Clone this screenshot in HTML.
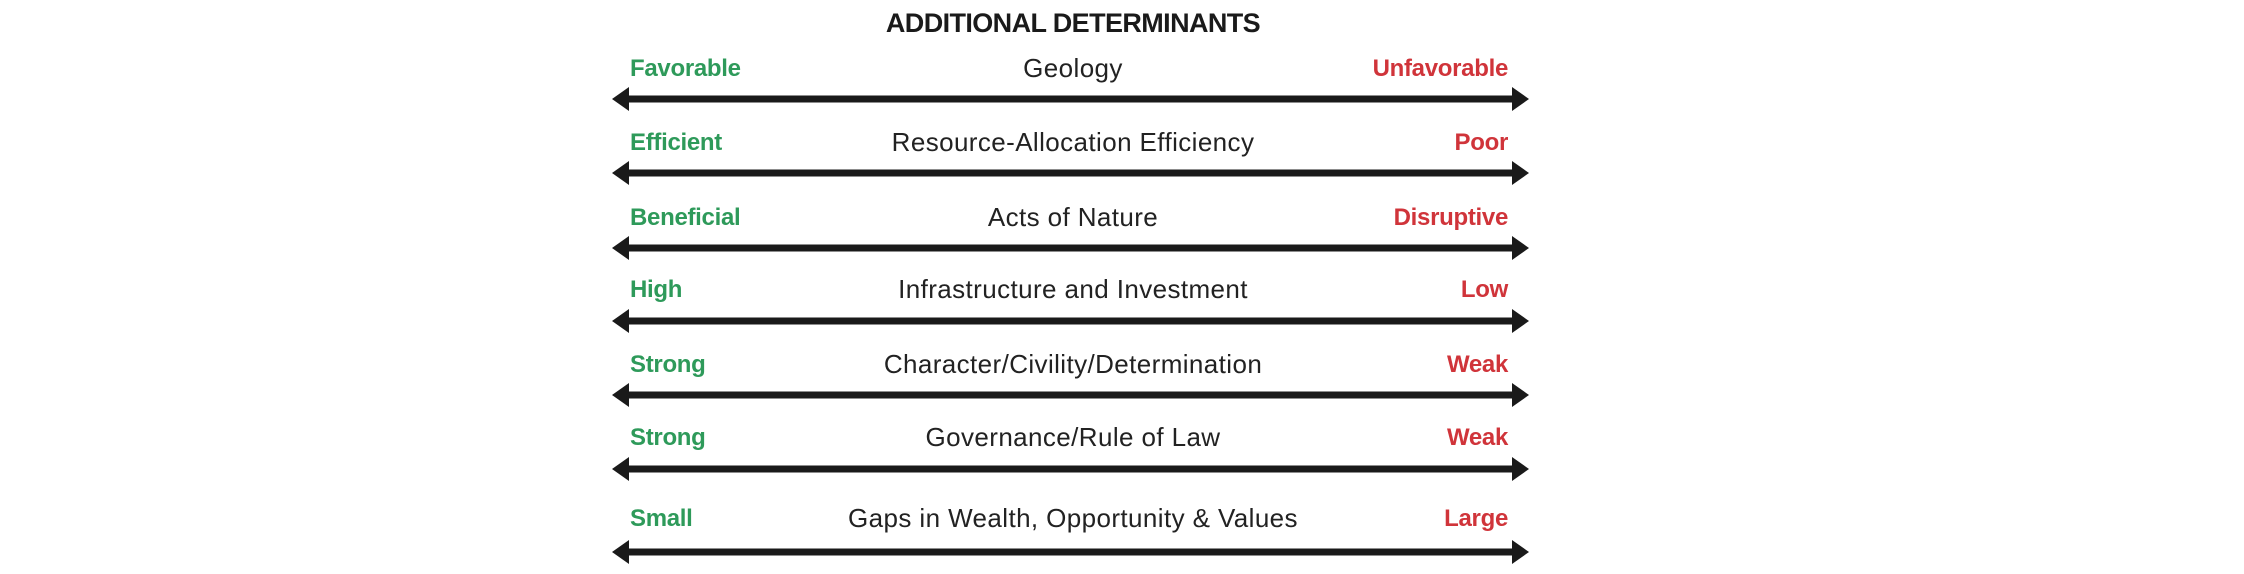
<!DOCTYPE html>
<html><head><style>
body{margin:0;width:2244px;height:574px;background:#fff;position:relative;overflow:hidden;font-family:"Liberation Sans",sans-serif}
.t{position:absolute;left:0;width:2146px;text-align:center;top:8px;font-size:27px;font-weight:bold;color:#1a1a1a;letter-spacing:-0.6px}
.l,.r,.c{position:absolute;font-size:24px;line-height:30px}
.l{left:630px;color:#2e9a5a;font-weight:bold;letter-spacing:-0.3px}
.r{right:736px;color:#d0343a;font-weight:bold;text-align:right;letter-spacing:-0.3px}
.c{left:0;width:2146px;text-align:center;color:#222;font-size:26px;letter-spacing:0.4px}
</style></head><body>
<div class="t">ADDITIONAL DETERMINANTS</div>
<svg width="2244" height="574" style="position:absolute;left:0;top:0">
<g fill="#1a1a1a">
<defs><g id="a"><rect x="625" y="-3.5" width="890" height="7"/><polygon points="612,0 629,-12 629,12"/><polygon points="1529,0 1512,-12 1512,12"/></g></defs>
<use href="#a" y="99"/><use href="#a" y="173"/><use href="#a" y="248"/><use href="#a" y="321"/><use href="#a" y="395"/><use href="#a" y="469"/><use href="#a" y="552"/>
</g></svg>
<div class="l" style="top:54px">Favorable</div><div class="c" style="top:53px">Geology</div><div class="r" style="top:54px">Unfavorable</div>
<div class="l" style="top:128px">Efficient</div><div class="c" style="top:127px">Resource-Allocation Efficiency</div><div class="r" style="top:128px">Poor</div>
<div class="l" style="top:203px">Beneficial</div><div class="c" style="top:202px">Acts of Nature</div><div class="r" style="top:203px">Disruptive</div>
<div class="l" style="top:275px">High</div><div class="c" style="top:274px">Infrastructure and Investment</div><div class="r" style="top:275px">Low</div>
<div class="l" style="top:350px">Strong</div><div class="c" style="top:349px">Character/Civility/Determination</div><div class="r" style="top:350px">Weak</div>
<div class="l" style="top:423px">Strong</div><div class="c" style="top:422px">Governance/Rule of Law</div><div class="r" style="top:423px">Weak</div>
<div class="l" style="top:504px">Small</div><div class="c" style="top:503px">Gaps in Wealth, Opportunity &amp; Values</div><div class="r" style="top:504px">Large</div>
</body></html>
